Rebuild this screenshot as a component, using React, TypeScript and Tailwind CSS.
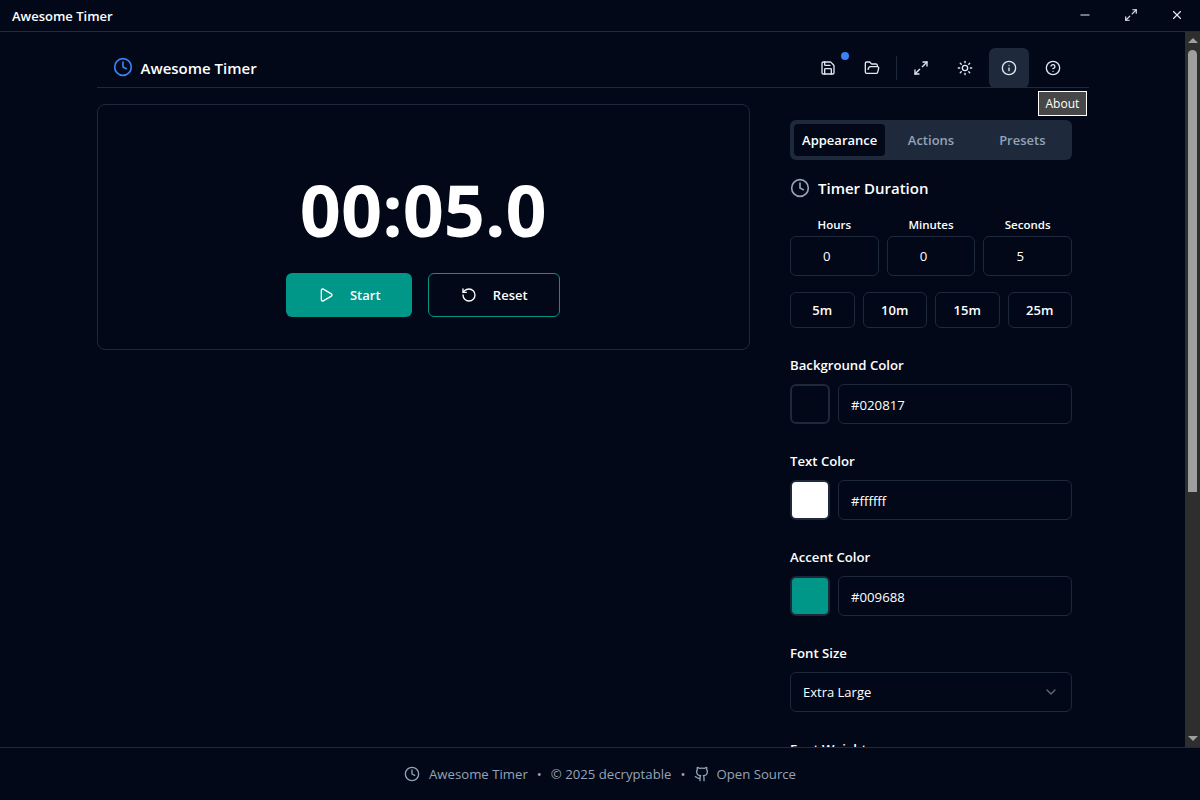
import {
  ChevronDown,
  CircleHelp,
  Clock,
  FolderOpen,
  Github,
  Info,
  Maximize2,
  Minus,
  Play,
  RotateCcw,
  Save,
  Sun,
  X,
} from "lucide-react";
import type { ReactNode } from "react";

const duration = [
  { label: "Hours", value: "0" },
  { label: "Minutes", value: "0" },
  { label: "Seconds", value: "5" },
];

const presets = ["5m", "10m", "15m", "25m"];

const colors = [
  { label: "Background Color", value: "#020817", swatch: "bg-[#020817]" },
  { label: "Text Color", value: "#ffffff", swatch: "bg-white" },
  { label: "Accent Color", value: "#009688", swatch: "bg-[#009688]" },
];

function HeaderButton({ children, active }: { children: ReactNode; active?: boolean }) {
  return (
    <button
      className={`relative flex h-10 w-10 items-center justify-center rounded-md text-[#e2e8f0] ${
        active ? "bg-[#1e293b]" : ""
      }`}
    >
      {children}
    </button>
  );
}

function Label({ children }: { children: ReactNode }) {
  return <div className="h-5 text-[13.2px] leading-5 font-semibold text-white">{children}</div>;
}

function TitleBar() {
  return (
    <div className="flex h-8 shrink-0 items-center justify-between border-b border-[#272a35] pb-px">
      <span className="pl-3 pt-[3px] text-[13px] font-semibold text-white">Awesome Timer</span>
      <div className="flex text-[#e5e7eb]">
        <div className="flex h-8 w-[46px] items-center justify-center">
          <Minus size={14} />
        </div>
        <div className="flex h-8 w-[46px] items-center justify-center">
          <Maximize2 size={14} />
        </div>
        <div className="flex h-8 w-[46px] items-center justify-center">
          <X size={14} />
        </div>
      </div>
    </div>
  );
}

function Header() {
  return (
    <header className="relative flex h-[56px] items-end justify-between border-b border-[#1e293b] pl-4 pr-4">
      <div className="flex h-10 items-center gap-2">
        <Clock size={20} className="text-[#3b82f6]" />
        <h1 className="pt-[3px] text-[15px] font-semibold text-white">Awesome Timer</h1>
      </div>
      <div className="-mb-px flex items-center gap-1">
        <HeaderButton>
          <Save size={16} />
          <span className="absolute right-[-1px] top-[4px] h-2 w-2 rounded-full bg-[#3b82f6]" />
        </HeaderButton>
        <HeaderButton>
          <FolderOpen size={16} />
        </HeaderButton>
        <div className="h-6 w-px bg-[#1e293b]" />
        <HeaderButton>
          <Maximize2 size={16} />
        </HeaderButton>
        <HeaderButton>
          <Sun size={16} />
        </HeaderButton>
        <HeaderButton active>
          <Info size={16} />
        </HeaderButton>
        <HeaderButton>
          <CircleHelp size={16} />
        </HeaderButton>
      </div>
      <div className="absolute left-[941px] top-[59px] border border-white bg-[#474747] px-[7px] py-[3px] text-[12px] leading-[17px] text-white">
        About
      </div>
    </header>
  );
}

function TimerCard() {
  return (
    <section className="mt-4 flex h-[246px] flex-1 flex-col items-center rounded-lg border border-[#1e293b]">
      <div className="mt-[59px] text-[72px] leading-[90px] font-bold text-white">00:05.0</div>
      <div className="mt-[19px] flex gap-4">
        <button className="flex h-11 w-[126px] items-center justify-center gap-4 rounded-md bg-[#009688] text-[13px] font-semibold text-white">
          <Play size={16} />
          <span className="pt-px">Start</span>
        </button>
        <button className="flex h-11 w-[132px] items-center justify-center gap-4 rounded-md border border-[#009688] text-[13px] font-semibold text-white">
          <RotateCcw size={16} />
          <span className="pt-px">Reset</span>
        </button>
      </div>
    </section>
  );
}

function SettingsPanel() {
  return (
    <aside className="mr-[16.5px] mt-8 w-[282px] shrink-0">
      <div className="grid h-10 grid-cols-3 rounded-md bg-[#1e293b] p-1 text-[13px] font-semibold">
        <div className="flex items-center justify-center rounded bg-[#020817] pt-px text-white">Appearance</div>
        <div className="flex items-center justify-center pt-px text-[#94a3b8]">Actions</div>
        <div className="flex items-center justify-center pt-px text-[#94a3b8]">Presets</div>
      </div>

      <div className="mt-[18px] flex h-[20px] items-center gap-2">
        <Clock size={20} className="text-[#94a3b8]" />
        <h2 className="text-[15px] font-semibold text-white">Timer Duration</h2>
      </div>

      <div className="mt-[17px] grid grid-cols-3 gap-2">
        {duration.map((d) => (
          <div key={d.label}>
            <div className="h-5 text-center text-[11.5px] leading-5 font-semibold text-white">{d.label}</div>
            <div className="mt-px flex h-10 items-center justify-center rounded-md border border-[#1e293b] pr-[15px] pt-px text-[13.2px] text-white">
              {d.value}
            </div>
          </div>
        ))}
      </div>

      <div className="mt-4 grid grid-cols-4 gap-2">
        {presets.map((p) => (
          <button
            key={p}
            className="h-9 rounded-md border border-[#1e293b] pt-px text-[13px] font-semibold text-white"
          >
            {p}
          </button>
        ))}
      </div>

      <div className="mt-[27px] flex flex-col gap-[27px]">
        {colors.map((c) => (
          <div key={c.label}>
            <Label>{c.label}</Label>
            <div className="mt-[9px] flex gap-2">
              <div className={`h-10 w-10 rounded-md border-2 border-[#1e293b] ${c.swatch}`} />
              <div className="flex h-10 flex-1 items-center rounded-md border border-[#1e293b] px-3 pt-[3px] text-[13.2px] text-white">
                {c.value}
              </div>
            </div>
          </div>
        ))}
        <div>
          <Label>Font Size</Label>
          <div className="mt-[9px] flex h-10 items-center justify-between rounded-md border border-[#1e293b] px-3 text-[13px] text-white">
            <span className="pt-px">Extra Large</span>
            <ChevronDown size={16} className="text-[#64687a]" />
          </div>
        </div>
        <div>
          <Label>Font Weight</Label>
        </div>
      </div>
    </aside>
  );
}

function Scrollbar() {
  return (
    <div className="flex w-[15px] shrink-0 flex-col items-center bg-[#2e2e2e]">
      <div className="mt-[6px] h-0 w-0 border-x-[5px] border-b-[5px] border-x-transparent border-b-[#9f9f9f]" />
      <div className="mt-[7px] h-[442px] w-[9px] rounded-t-[5px] bg-[#9f9f9f]" />
      <div className="mt-auto mb-[6px] h-0 w-0 border-x-[5px] border-t-[5px] border-x-transparent border-t-[#9f9f9f]" />
    </div>
  );
}

function Footer() {
  return (
    <footer className="flex h-[53px] shrink-0 items-center justify-center gap-[9px] border-t border-[#1e293b] pt-px text-[13.2px] text-[#94a3b8]">
      <span className="flex items-center gap-[9px]">
        <Clock size={16} />
        Awesome Timer
      </span>
      <span>•</span>
      <span>© 2025 decryptable</span>
      <span>•</span>
      <span className="flex items-center gap-[6px]">
        <Github size={16} />
        Open Source
      </span>
    </footer>
  );
}

export default function App() {
  return (
    <div
      className="flex h-screen flex-col overflow-hidden bg-[#020817]"
      style={{ fontFamily: '"Open Sans", "Noto Sans", sans-serif' }}
    >
      <TitleBar />
      <div className="flex min-h-0 flex-1">
        <main className="min-w-0 flex-1 overflow-hidden">
          <div className="mx-auto max-w-5xl px-4">
            <Header />
            <div className="flex gap-10">
              <TimerCard />
              <SettingsPanel />
            </div>
          </div>
        </main>
        <Scrollbar />
      </div>
      <Footer />
    </div>
  );
}
